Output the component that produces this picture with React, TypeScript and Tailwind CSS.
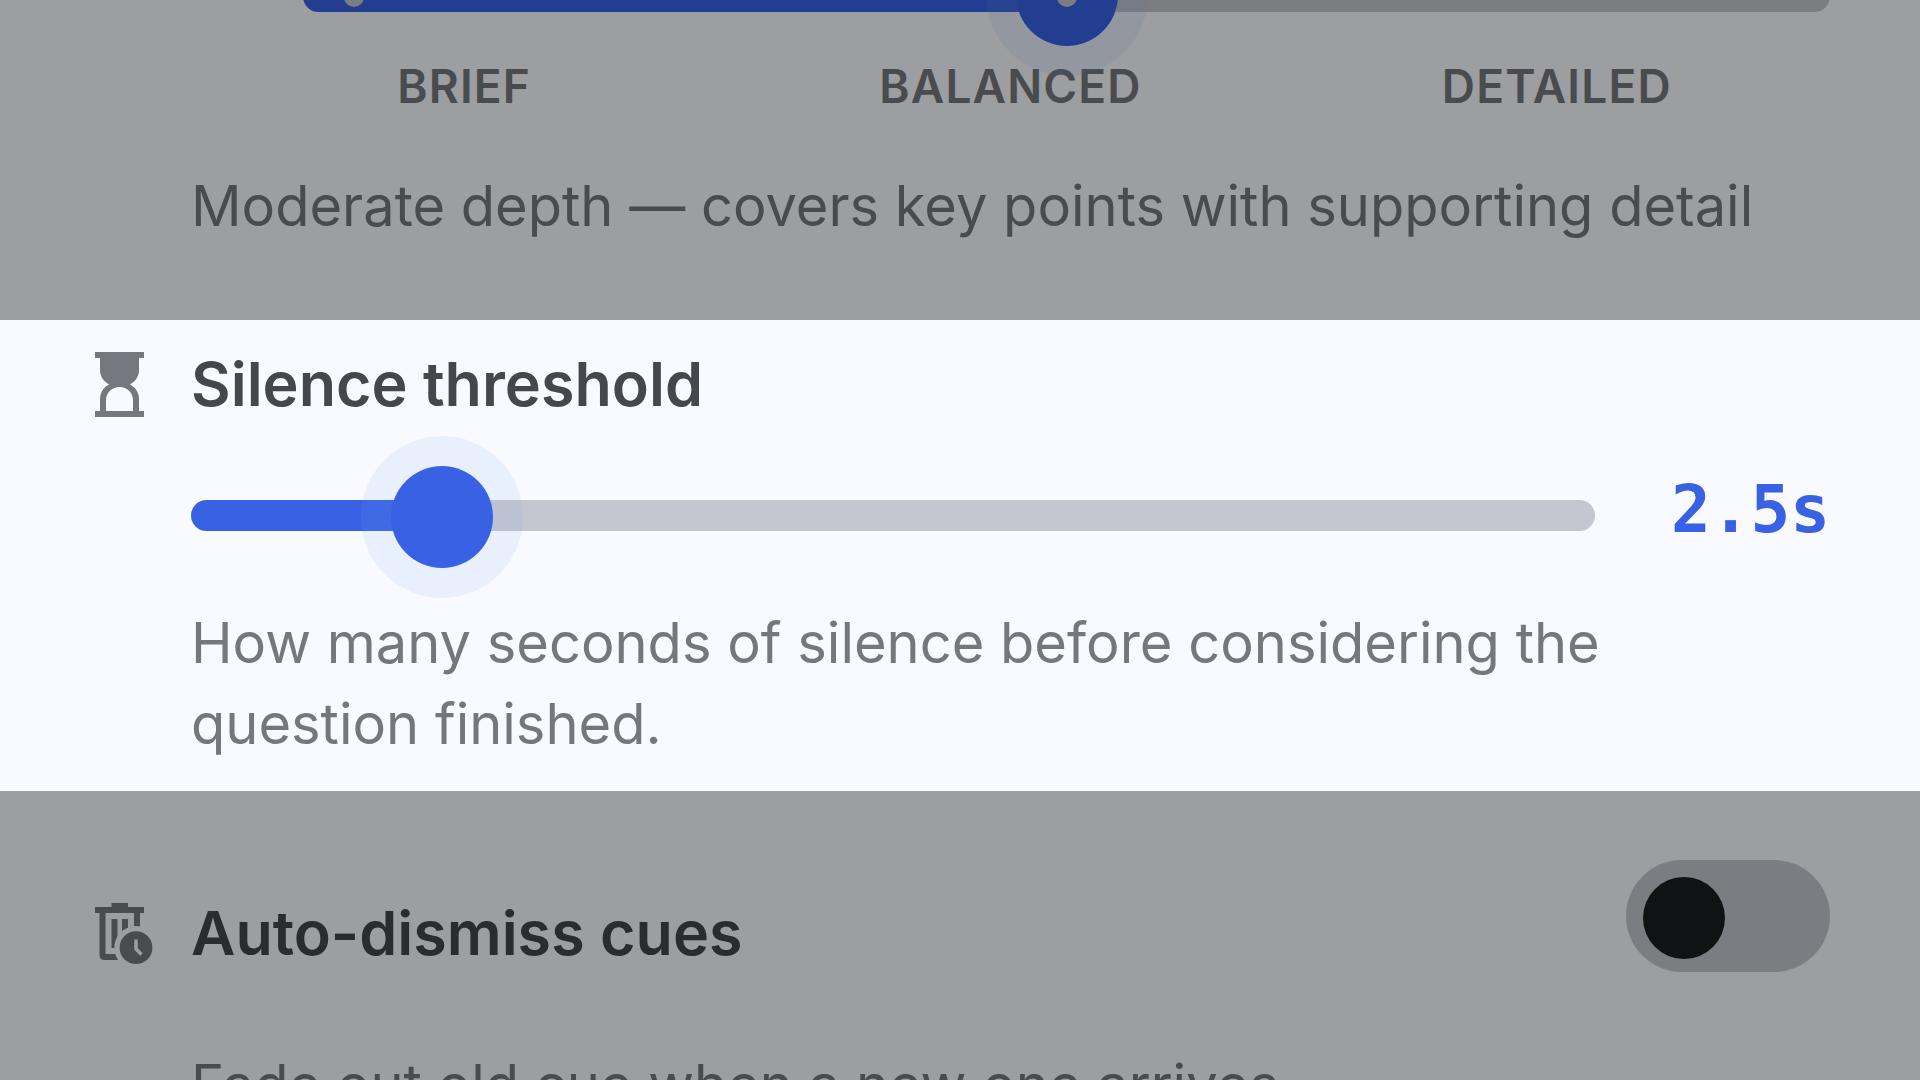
import { useState } from "react"
import type { CSSProperties, ReactNode } from "react"

function HourglassIcon() {
  return (
    <svg width={49} height={65} viewBox="0 0 49 65" fill="#75787e" aria-hidden="true">
      <path fillRule="evenodd" d="M0 0h49v6h-5v12c0 6-3 11-9 14.500c6 3 9 8.500 9 15V59h5v6H0v-6h5V47.500c0-6.500 3-12 9-15C8 29 5 24 5 18V6H0zM11 59h27V48.500c0-8-6-13.500-13.500-13.500S11 40.500 11 48.500z" />
    </svg>
  )
}

function AutoDeleteIcon() {
  return (
    <svg width={58} height={62} viewBox="0 0 58 62" fill="#75787e" aria-hidden="true">
      <path d="M16.500 0h16.500v4h16v6h-4v18h-6V10H10.500v41H24v6H9.500Q4.500 57 4.500 51.500V10H0V4h16.500z" />
      <path d="M16.500 16h6v29h-6zM27 16h6v20h-6z" />
      <circle cx="41" cy="44.700" r="21.700" fill="#f9faff" />
      <circle cx="41" cy="44.700" r="16.400" />
      <path d="M41 36.500v9.500l5.500 5.500" fill="none" stroke="#f9faff" strokeWidth="3.500" />
    </svg>
  )
}

type SliderProps = {
  id: string
  label: string
  min: number
  max: number
  step: number
  value: number
  onChange: (value: number) => void
  className: string
}

function Slider({ id, label, min, max, step, value, onChange, className }: SliderProps) {
  const ratio = (value - min) / (max - min)
  const fill = { "--fill": `calc(51px + (100% - 102px) * ${ratio})` } as CSSProperties

  return (
    <input
      id={id}
      type="range"
      aria-label={label}
      min={min}
      max={max}
      step={step}
      value={value}
      onChange={(e) => onChange(Number(e.target.value))}
      style={fill}
      className={`block h-[31px] w-full cursor-pointer appearance-none rounded-full bg-transparent outline-none [&::-webkit-slider-runnable-track]:h-[31px] [&::-webkit-slider-runnable-track]:rounded-full [&::-webkit-slider-runnable-track]:bg-[linear-gradient(to_right,#3861e4_var(--fill),#c4c6d0_var(--fill))] [&::-webkit-slider-thumb]:size-[102px] [&::-webkit-slider-thumb]:appearance-none [&::-webkit-slider-thumb]:rounded-full [&::-webkit-slider-thumb]:bg-[#3861e4] [&::-webkit-slider-thumb]:shadow-[0_0_0_30px_rgba(125,175,238,0.12)] ${className}`}
    />
  )
}

function Section({ dimmed, className, children }: { dimmed?: boolean; className: string; children: ReactNode }) {
  return (
    <section className={`relative overflow-hidden pl-[95px] pr-[90px] ${className}`}>
      {children}
      {dimmed && <div className="pointer-events-none absolute inset-0 bg-black/37" />}
    </section>
  )
}

export default function App() {
  const [depth, setDepth] = useState(1)
  const [silence, setSilence] = useState(2.5)
  const [dismiss, setDismiss] = useState(false)

  return (
    <main className="flex h-screen flex-col overflow-hidden bg-[#f9faff] font-['Inter',sans-serif] text-[#74777e]">
      <Section dimmed className="shrink-0 pb-[73px]">
        <div className="ml-24">
          <div className="relative -mt-[19px] ml-28">
            <Slider
              id="depth"
              label="Answer depth"
              min={0}
              max={2}
              step={1}
              value={depth}
              onChange={setDepth}
              className="[&::-webkit-slider-thumb]:-mt-[37px]"
            />
            <div className="pointer-events-none absolute inset-0 flex items-center justify-between px-[41px]">
              <span className="size-5 rounded-full bg-[#c4c6d0]" />
              <span className="size-5 rounded-full bg-[#c4c6d0]" />
              <span className="size-5 rounded-full bg-[#c4c6d0]" />
            </div>
          </div>
          <div className="mt-[42px] grid grid-cols-3 text-center text-[46px] leading-[64px] font-semibold tracking-wide">
            <span>BRIEF</span>
            <span>BALANCED</span>
            <span>DETAILED</span>
          </div>
          <p className="mt-12 text-[56px] leading-[81px]">Moderate depth — covers key points with supporting detail</p>
        </div>
      </Section>

      <Section className="flex shrink-0 items-start pt-8 pb-[26px]">
        <div className="w-24 shrink-0">
          <HourglassIcon />
        </div>
        <div className="grow">
          <h2 className="text-[61px] leading-[64px] font-semibold text-[#44474e]">
            <label htmlFor="silence">Silence threshold</label>
          </h2>
          <div className="mt-14 flex items-center gap-[76px]">
            <Slider
              id="silence"
              label="Silence threshold"
              min={0.5}
              max={13.5}
              step={0.5}
              value={silence}
              onChange={setSilence}
              className="[&::-webkit-slider-thumb]:-mt-[34px]"
            />
            <output htmlFor="silence" className="pt-0.5 pb-3 font-['DejaVu_Sans_Mono',monospace] text-[66px] leading-[72px] font-bold text-[#3861e4]">
              {silence.toFixed(1)}s
            </output>
          </div>
          <p className="mt-[45px] max-w-[1450px] text-[56px] leading-[81px]">
            How many seconds of silence before considering the question finished.
          </p>
        </div>
      </Section>

      <Section dimmed className="flex grow items-start">
        <div className="w-24 shrink-0 pt-28">
          <AutoDeleteIcon />
        </div>
        <div className="grow pt-[110px]">
          <h2 className="text-[61px] leading-[64px] font-semibold text-[#44474e]">
            <label htmlFor="dismiss">Auto-dismiss cues</label>
          </h2>
          <p className="mt-20 text-[56px] leading-[81px] whitespace-nowrap">Fade out old cue when a new one arrives</p>
        </div>
        <input
          id="dismiss"
          type="checkbox"
          role="switch"
          checked={dismiss}
          onChange={(e) => setDismiss(e.target.checked)}
          className="mt-[69px] flex h-28 w-[204px] shrink-0 cursor-pointer appearance-none items-center rounded-full bg-[#c4c6d0] px-[17px] pt-[3px] before:size-[82px] before:rounded-full before:bg-[#1b1e21] checked:justify-end checked:bg-[#3861e4]"
        />
      </Section>
    </main>
  )
}
